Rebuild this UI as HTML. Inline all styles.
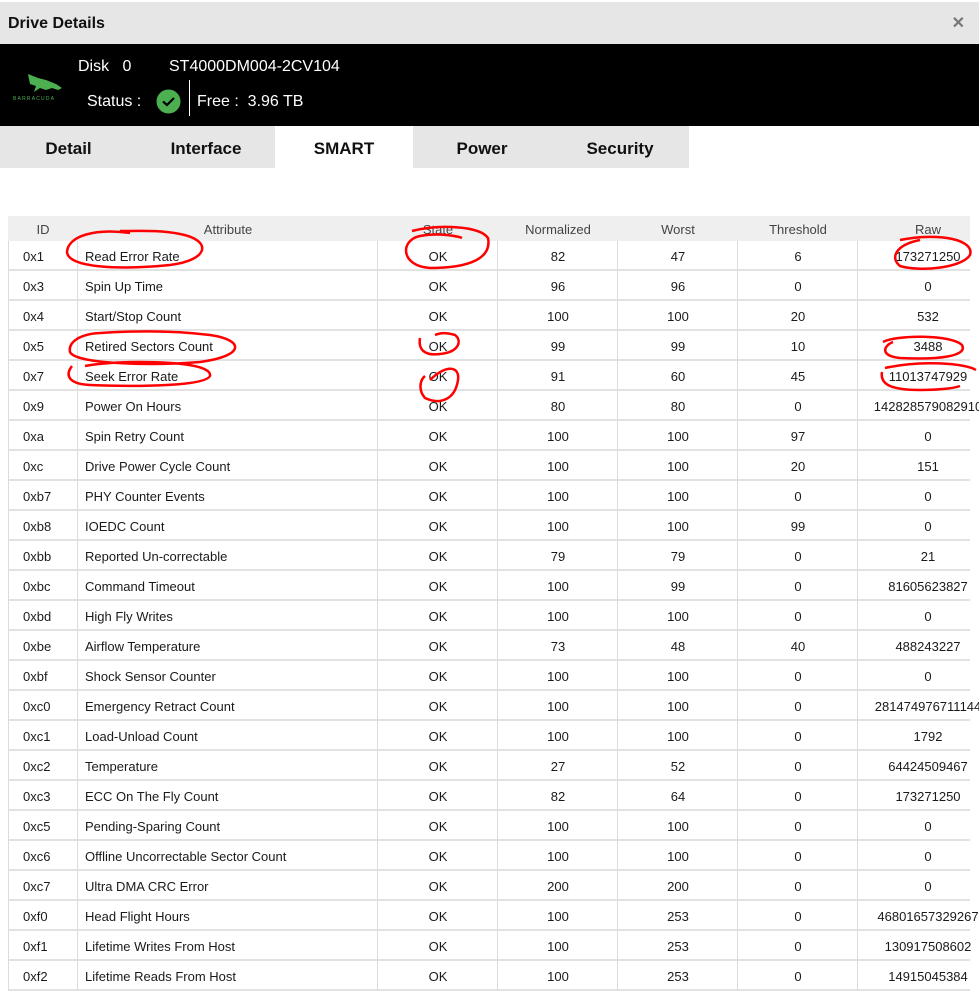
<!DOCTYPE html>
<html><head><meta charset="utf-8"><style>
*{margin:0;padding:0;box-sizing:border-box}
body{width:979px;height:1001px;overflow:hidden;background:#fff;font-family:"Liberation Sans",sans-serif;position:relative;color:#1a1a1a}
.title{position:absolute;left:0;top:2px;width:979px;height:42px;background:#e6e6e6;font-weight:bold;font-size:16px;line-height:44px;padding-left:8px;color:#111}
.close{position:absolute;right:14px;top:0;font-size:16px;color:#777}
.hdr{position:absolute;left:0;top:44px;width:979px;height:82px;background:#000;color:#fff;font-size:16px}
.tabs{position:absolute;top:126px;left:0;height:42px}
.tab{position:absolute;top:0;height:42px;line-height:45px;text-align:center;font-weight:bold;font-size:17px;background:#e6e6e6;color:#111}
.th{position:absolute;top:216px;left:8px;width:962px;height:25px;background:#efefef}
.c{position:absolute;font-size:13px;text-align:center;white-space:nowrap}
.hl{position:absolute;left:8px;width:962px;height:2px;background:#e2e2e2}
.vl{position:absolute;width:1px;background:#dcdcdc;top:241px;height:750px}
</style></head><body>
<div class="title">Drive Details<span class="close">✕</span></div>
<div class="hdr">
<svg style="position:absolute;left:12px;top:28px" width="58" height="32" viewBox="0 0 58 32"><path d="M16 2 L26 6 L34 8 L44 12 L50 16 L46 18 L40 16 L34 18 L28 16 L22 20 L24 14 L18 12 Z" fill="#4caf50"/><text x="1" y="28" font-size="5" fill="#4caf50" font-family="Liberation Sans" letter-spacing="1.2">BARRACUDA</text></svg>
<span style="position:absolute;left:78px;top:14px">Disk&nbsp;&nbsp;&nbsp;0</span>
<span style="position:absolute;left:169px;top:14px">ST4000DM004-2CV104</span>
<span style="position:absolute;left:87px;top:49px">Status :</span>
<svg style="position:absolute;left:156px;top:45px" width="25" height="25"><circle cx="12.5" cy="12.5" r="12" fill="#4caf50"/><path d="M7 12.5 L11 16 L18 9" stroke="#000" stroke-width="2.2" fill="none"/></svg>
<div style="position:absolute;left:189px;top:36px;width:1px;height:36px;background:#fff"></div>
<span style="position:absolute;left:197px;top:49px">Free :&nbsp; 3.96 TB</span>
</div>
<div class="tabs">
<div class="tab" style="left:0;width:137px">Detail</div>
<div class="tab" style="left:137px;width:138px">Interface</div>
<div class="tab" style="left:275px;width:138px;background:#fff">SMART</div>
<div class="tab" style="left:413px;width:138px">Power</div>
<div class="tab" style="left:551px;width:138px">Security</div>
</div>
<div class="th"></div>
<div id="t"></div>
<script>
var rows=[["0x1","Read Error Rate",82,47,6,"173271250"],["0x3","Spin Up Time",96,96,0,"0"],["0x4","Start/Stop Count",100,100,20,"532"],["0x5","Retired Sectors Count",99,99,10,"3488"],["0x7","Seek Error Rate",91,60,45,"11013747929"],["0x9","Power On Hours",80,80,0,"142828579082910"],["0xa","Spin Retry Count",100,100,97,"0"],["0xc","Drive Power Cycle Count",100,100,20,"151"],["0xb7","PHY Counter Events",100,100,0,"0"],["0xb8","IOEDC Count",100,100,99,"0"],["0xbb","Reported Un-correctable",79,79,0,"21"],["0xbc","Command Timeout",100,99,0,"81605623827"],["0xbd","High Fly Writes",100,100,0,"0"],["0xbe","Airflow Temperature",73,48,40,"488243227"],["0xbf","Shock Sensor Counter",100,100,0,"0"],["0xc0","Emergency Retract Count",100,100,0,"281474976711144"],["0xc1","Load-Unload Count",100,100,0,"1792"],["0xc2","Temperature",27,52,0,"64424509467"],["0xc3","ECC On The Fly Count",82,64,0,"173271250"],["0xc5","Pending-Sparing Count",100,100,0,"0"],["0xc6","Offline Uncorrectable Sector Count",100,100,0,"0"],["0xc7","Ultra DMA CRC Error",200,200,0,"0"],["0xf0","Head Flight Hours",100,253,0,"46801657329267"],["0xf1","Lifetime Writes From Host",100,253,0,"130917508602"],["0xf2","Lifetime Reads From Host",100,253,0,"14915045384"]];
var h='';
function c(x,y,w,t,al,col){h+='<div class="c" style="left:'+x+'px;top:'+y+'px;width:'+w+'px;text-align:'+(al||'center')+';color:'+(col||'#1a1a1a')+'">'+t+'</div>';}
var hy=222;
c(8,hy,70,'ID',0,'#444');c(78,hy,300,'Attribute',0,'#444');c(378,hy,120,'State',0,'#444');c(498,hy,120,'Normalized',0,'#444');c(618,hy,120,'Worst',0,'#444');c(738,hy,120,'Threshold',0,'#444');c(858,hy,140,'Raw',0,'#444');
for(var i=0;i<rows.length;i++){var r=rows[i],y=241+i*30;
h+='<div class="hl" style="top:'+(y+28)+'px"></div>';
var ty=y+8;
c(23,ty,60,r[0],'left');c(85,ty,290,r[1],'left');c(378,ty,120,'OK');c(498,ty,120,r[2]);c(618,ty,120,r[3]);c(738,ty,120,r[4]);c(858,ty,140,r[5]);}
[8,77,377,497,617,737,857].forEach(function(x){h+='<div class="vl" style="left:'+x+'px"></div>';});
document.getElementById('t').innerHTML=h;
</script>
<svg style="position:absolute;left:0;top:0" width="979" height="1001" fill="none" stroke="#f00" stroke-width="2.5">
<path d="M130 233 C95 228 68 236 67 252 C68 268 120 270 170 265 C210 260 212 240 180 234 C160 230 140 231 120 231"/>
<path d="M412 231 C440 224 480 226 488 238 C492 258 470 268 430 268 C400 266 400 240 420 236 C440 232 460 237 462 238"/>
<path d="M900 240 C940 232 975 240 970 255 C962 268 920 272 900 266 C890 258 895 245 920 240"/>
<path d="M100 333 C80 334 68 342 70 352 C75 364 150 366 200 362 C245 356 245 340 210 335 C170 330 130 331 100 333"/>
<path d="M420 338 C418 350 425 356 440 354 C460 352 462 340 455 335 C445 332 440 333 435 335"/>
<path d="M883 342 C895 335 950 334 962 345 C968 356 940 360 900 358 C880 356 883 346 893 342"/>
<path d="M72 366 C65 375 68 384 90 385 C140 387 205 386 210 376 C212 366 180 362 140 362 C110 362 90 365 85 366"/>
<path d="M430 380 C445 365 460 365 458 380 C455 400 440 405 425 398 C418 390 420 380 425 376"/>
<path d="M885 368 C920 360 965 363 976 370 M882 372 C880 384 890 390 920 390 C940 390 955 388 960 386"/>
</svg>
</body></html>
